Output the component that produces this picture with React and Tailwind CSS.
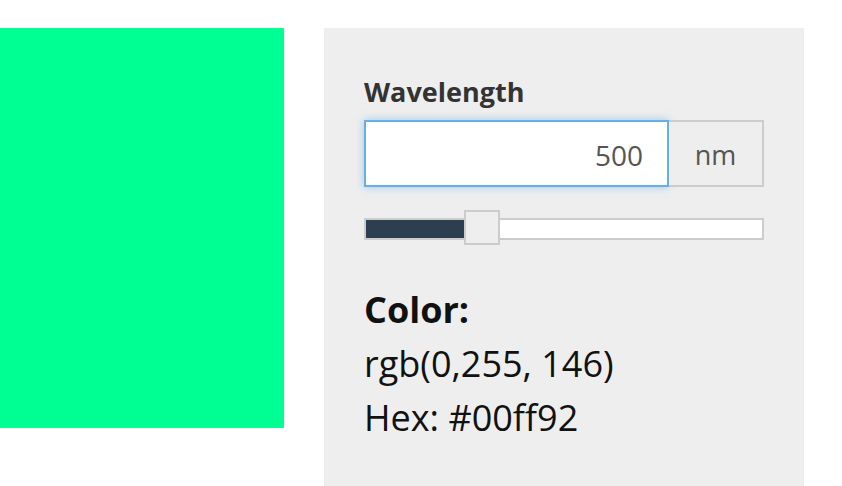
import { useState } from "react";

const MIN = 380;
const MAX = 780;

function toRgb(nm) {
  // fixed sample for the reference
  return { r: 0, g: 255, b: 146, hex: "#00ff92" };
}

export default function App() {
  const [value] = useState(500);
  const color = toRgb(value);
  const pct = ((value - MIN) / (MAX - MIN)) * 100;

  return (
    <div className="flex gap-10 bg-white pt-7 font-['Open_Sans',sans-serif]">
      <div className="h-[400px] w-[284px] shrink-0 bg-[#00ff92]" />

      <div className="h-[470px] w-[480px] shrink-0 bg-[#eeeeee] px-10 pt-[43px]">
        <label className="block text-[27px] font-bold leading-[42px] text-[#333]">
          Wavelength
        </label>

        <div className="mt-[7px] flex h-[67px]">
          <input
            type="text"
            readOnly
            value={value}
            className="h-full w-[305px] border-2 border-[#66afe9] bg-white px-6 pt-[3px] text-right text-[28px] text-[#555] shadow-[0_0_8px_rgba(102,175,233,0.6)] outline-none"
          />
          <div className="flex h-full flex-1 items-center justify-center border-2 border-l-0 border-[#cccccc] bg-[#eeeeee] pt-[3px] text-[27px] text-[#555]">
            nm
          </div>
        </div>

        <div className="relative mt-[23px] h-[35px]">
          <div className="absolute left-0 right-0 top-[8px] h-[22px] border-2 border-[#cccccc] bg-white">
            <div className="h-full bg-[#2c3e50]" style={{ width: `${pct}%` }} />
          </div>
          <div className="absolute top-0 left-[100px] h-[35px] w-[36px] border-2 border-[#cccccc] bg-[#eeeeee]" />
        </div>

        <div className="mt-[38px] text-[36px] leading-[54px] text-[#111]">
          <div className="font-bold">Color:</div>
          <div>
            rgb({color.r},{color.g}, {color.b})
          </div>
          <div>Hex: {color.hex}</div>
        </div>
      </div>
    </div>
  );
}
